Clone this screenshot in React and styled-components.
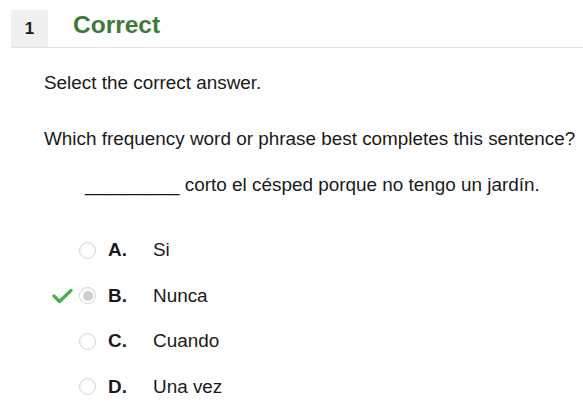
import React from "react";
import styled, { createGlobalStyle } from "styled-components";

const Global = createGlobalStyle`
  body {
    margin: 0;
    background: #fff;
    font-family: "Liberation Sans", Arial, sans-serif;
    color: #1a1a1a;
  }
`;

const Page = styled.div`
  padding: 10px 0 0 11px;
`;

const Header = styled.div`
  display: flex;
  align-items: center;
  border-bottom: 1px solid #e3e3e3;
  height: 37px;
`;

const Num = styled.div`
  width: 37px;
  height: 37px;
  background: #f0f0f0;
  display: flex;
  align-items: center;
  justify-content: center;
  font-weight: bold;
  font-size: 17px;
`;

const Title = styled.h2`
  margin: 0 0 7px 25px;
  font-size: 24.5px;
  color: #3e7b3a;
  font-weight: bold;
`;

const Body = styled.div`
  padding-left: 33px;
  font-size: 18.9px;
`;

const Para = styled.p`
  margin: ${(p) => p.mt}px 0 0 ${(p) => p.ml || 0}px;
  line-height: 20px;
  white-space: nowrap;
`;

const List = styled.div`
  margin-top: 45px;
  display: flex;
  flex-direction: column;
  gap: 25.5px;
`;

const Row = styled.div`
  display: flex;
  align-items: center;
  height: 20px;
`;

const Check = styled.div`
  width: 35px;
  display: flex;
  justify-content: flex-start;
  padding-left: 8px;
  box-sizing: border-box;
`;

const Radio = styled.span`
  width: 17px;
  height: 17px;
  border-radius: 50%;
  border: 1px solid #d6d6d6;
  box-sizing: border-box;
  background: #fff;
  display: flex;
  align-items: center;
  justify-content: center;
  box-shadow: inset 0 1px 2px rgba(0, 0, 0, 0.06);
  &::after {
    content: "";
    width: 10px;
    height: 10px;
    border-radius: 50%;
    background: ${(p) => (p.checked ? "#cfcfcf" : "transparent")};
  }
`;

const Letter = styled.span`
  font-weight: bold;
  width: 45px;
  margin-left: 12px;
`;

const options = [
  { l: "A.", t: "Si" },
  { l: "B.", t: "Nunca", correct: true },
  { l: "C.", t: "Cuando" },
  { l: "D.", t: "Una vez" },
];

export default function App() {
  return (
    <Page>
      <Global />
      <Header>
        <Num>1</Num>
        <Title>Correct</Title>
      </Header>
      <Body>
        <Para mt={25}>Select the correct answer.</Para>
        <Para mt={36}>
          Which frequency word or phrase best completes this sentence?
        </Para>
        <Para mt={26} ml={41}>
          _________ corto el césped porque no tengo un jardín.
        </Para>
        <List>
          {options.map((o) => (
            <Row key={o.l}>
              <Check>
                {o.correct && (
                  <svg width="21" height="16" viewBox="0 0 21 16">
                    <path
                      d="M2 8 L7.5 13.5 L19 2.5"
                      fill="none"
                      stroke="#4caf50"
                      strokeWidth="3.2"
                      strokeLinecap="round"
                      strokeLinejoin="round"
                    />
                  </svg>
                )}
              </Check>
              <Radio checked={o.correct} />
              <Letter>{o.l}</Letter>
              <span>{o.t}</span>
            </Row>
          ))}
        </List>
      </Body>
    </Page>
  );
}
